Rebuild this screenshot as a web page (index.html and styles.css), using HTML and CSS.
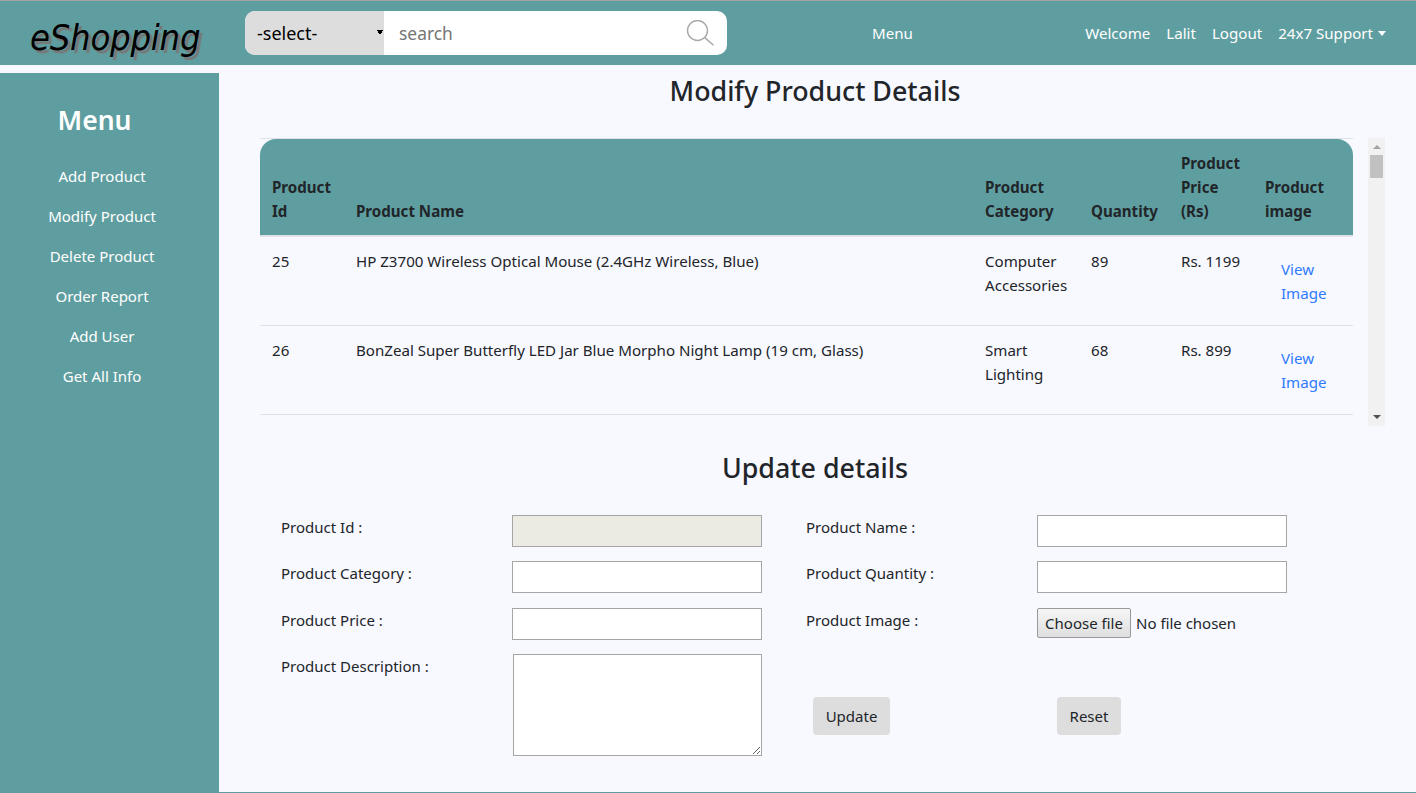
FILE: index.html
```html
<!DOCTYPE html>
<html lang="en">
<head>
    <meta charset="UTF-8">
    <meta name="viewport" content="width=device-width, initial-scale=1.0">
    <title>eShopping - Modify Product</title>
    <link rel="stylesheet" href="styles.css">
</head>
<body>
    <nav class="navbar">
        <a class="brand" href="#">eShopping</a>
        <form class="search-box">
            <select class="search-select">
                <option>-select-</option>
            </select>
            <input type="text" class="search-input" placeholder="search">
            <svg class="search-icon" viewBox="0 0 28 26">
                <circle cx="11.5" cy="10.5" r="10"/>
                <path d="M18.8 17.6 27.5 25.2"/>
            </svg>
        </form>
        <a class="nav-link nav-menu" href="#">Menu</a>
        <div class="nav-right">
            <a class="nav-link" href="#">Welcome</a>
            <a class="nav-link" href="#">Lalit</a>
            <a class="nav-link" href="#">Logout</a>
            <a class="nav-link support" href="#">24x7 Support</a>
        </div>
    </nav>

    <div class="page">
        <aside class="sidebar">
            <h3>Menu</h3>
            <ul>
                <li><a href="#">Add Product</a></li>
                <li><a href="#">Modify Product</a></li>
                <li><a href="#">Delete Product</a></li>
                <li><a href="#">Order Report</a></li>
                <li><a href="#">Add User</a></li>
                <li><a href="#">Get All Info</a></li>
            </ul>
        </aside>

        <main class="content">
            <h3 class="page-title">Modify Product Details</h3>

            <div class="table-area">
                <div class="table-scroll">
                    <table class="product-table">
                        <colgroup>
                            <col class="col-id">
                            <col class="col-name">
                            <col class="col-cat">
                            <col class="col-qty">
                            <col class="col-price">
                            <col class="col-img">
                        </colgroup>
                        <thead>
                            <tr>
                                <th>Product Id</th>
                                <th>Product Name</th>
                                <th>Product Category</th>
                                <th>Quantity</th>
                                <th>Product Price (Rs)</th>
                                <th>Product image</th>
                            </tr>
                        </thead>
                        <tbody>
                            <tr>
                                <td>25</td>
                                <td>HP Z3700 Wireless Optical Mouse (2.4GHz Wireless, Blue)</td>
                                <td>Computer Accessories</td>
                                <td>89</td>
                                <td>Rs. 1199</td>
                                <td><a class="view-link" href="#">View Image</a></td>
                            </tr>
                            <tr>
                                <td>26</td>
                                <td>BonZeal Super Butterfly LED Jar Blue Morpho Night Lamp (19 cm, Glass)</td>
                                <td>Smart Lighting</td>
                                <td>68</td>
                                <td>Rs. 899</td>
                                <td><a class="view-link" href="#">View Image</a></td>
                            </tr>
                        </tbody>
                    </table>
                </div>
                <div class="scrollbar">
                    <span class="arrow-up"></span>
                    <span class="thumb"></span>
                    <span class="arrow-down"></span>
                </div>
            </div>

            <h3 class="update-title">Update details</h3>

            <form class="update-form">
                <label>Product Id :</label>
                <input type="text" class="field field-disabled" disabled>
                <span></span>
                <label>Product Name :</label>
                <input type="text" class="field">

                <label>Product Category :</label>
                <input type="text" class="field">
                <span></span>
                <label>Product Quantity :</label>
                <input type="text" class="field">

                <label>Product Price :</label>
                <input type="text" class="field">
                <span></span>
                <label>Product Image :</label>
                <div class="file-field">
                    <button type="button" class="file-btn">Choose file</button>
                    <span>No file chosen</span>
                </div>

                <label>Product Description :</label>
                <textarea class="field-area"></textarea>
                <span></span>
                <div class="btn-cell"><button type="button" class="btn btn-update">Update</button></div>
                <div class="btn-cell"><button type="reset" class="btn btn-reset">Reset</button></div>
            </form>
        </main>
    </div>
</body>
</html>
```
FILE: styles.css
```css
* {
    margin: 0;
    padding: 0;
    box-sizing: border-box;
}

html, body {
    height: 793px;
    overflow: hidden;
}

body {
    font-family: "Noto Sans", "Open Sans", sans-serif;
    font-size: 15.1px;
    line-height: 24px;
    color: #212529;
    background: #f8f8ff;
    display: flex;
    flex-direction: column;
    border-top: 1px solid #a3a3a3;
    border-bottom: 1px solid #5f9ea0;
}

a {
    text-decoration: none;
}

/* top bar */
.navbar {
    height: 64px;
    flex-shrink: 0;
    background: #5f9ea0;
    display: flex;
    align-items: center;
    padding-right: 30px;
}

.brand {
    width: 245px;
    padding: 9px 0 0 30px;
    font-family: "DejaVu Sans Condensed", "DejaVu Sans", sans-serif;
    font-style: italic;
    font-size: 36px;
    line-height: 48px;
    letter-spacing: -0.2px;
    color: #000;
    text-shadow: 3px 3px 1px #777;
}

.search-box {
    width: 482px;
    height: 44px;
    border-radius: 10px;
    background: #fff;
    display: flex;
    align-items: center;
    overflow: hidden;
    position: relative;
}

.search-select {
    width: 139px;
    height: 44px;
    border: none;
    outline: none;
    padding-left: 12px;
    appearance: none;
    color: #000;
    font-family: inherit;
    font-size: 18px;
    background-color: #ddd;
    background-image:
        linear-gradient(to top right, transparent 50%, #000 50%),
        linear-gradient(to top left, transparent 50%, #000 50%);
    background-size: 3px 5px;
    background-repeat: no-repeat;
    background-position: 132px 19px, 135px 19px;
}

.search-input {
    flex: 1;
    height: 44px;
    border: none;
    outline: none;
    padding-left: 15px;
    background: transparent;
    font-family: inherit;
    font-size: 17.4px;
}

.search-input::placeholder {
    color: #757575;
}

.search-icon {
    position: absolute;
    right: 13px;
    top: 9px;
    width: 28px;
    height: 26px;
    fill: none;
    stroke: #a8a8a8;
    stroke-width: 1.4;
}

.nav-link {
    color: #fff;
}

.nav-menu {
    margin-left: 145px;
}

.nav-right {
    margin-left: auto;
    display: flex;
    gap: 16px;
}

.support::after {
    content: "";
    display: inline-block;
    margin-left: 5px;
    vertical-align: 3px;
    border-top: 5px solid #fff;
    border-left: 4.5px solid transparent;
    border-right: 4.5px solid transparent;
}

/* below the bar */
.page {
    flex: 1;
    display: flex;
    min-height: 0;
}

.sidebar {
    width: 219px;
    flex-shrink: 0;
    margin-top: 8px;
    background: #5f9ea0;
    color: #fff;
    font-size: 15px;
}

.sidebar h3 {
    width: 189px;
    margin-top: 29px;
    text-align: center;
    font-size: 26.5px;
    font-weight: 600;
    line-height: 36px;
}

.sidebar ul {
    list-style: none;
    width: 204px;
    margin-top: 18px;
    text-align: center;
}

.sidebar li {
    height: 40px;
    padding-top: 8px;
}

.sidebar a {
    color: #fff;
}

.content {
    flex: 1;
    min-width: 0;
    padding-right: 5px;
}

.page-title,
.update-title {
    text-align: center;
    font-size: 26.8px;
    font-weight: 500;
    line-height: 34px;
}

.page-title {
    margin-top: 9px;
}

/* table with the scrollbar beside it */
.table-area {
    width: 1125px;
    height: 288px;
    margin: 30px 0 0 41px;
    display: flex;
    justify-content: space-between;
}

.table-scroll {
    width: 1093px;
    overflow: hidden;
}

.scrollbar {
    width: 17px;
    background: #f1f1f1;
    display: flex;
    flex-direction: column;
    align-items: center;
    position: relative;
}

.arrow-up,
.arrow-down {
    position: absolute;
    left: 4.5px;
    border-left: 4px solid transparent;
    border-right: 4px solid transparent;
}

.arrow-up {
    top: 7px;
    border-bottom: 4px solid #a3a3a3;
}

.arrow-down {
    bottom: 7px;
    border-top: 4px solid #505050;
}

.thumb {
    width: 13px;
    height: 23px;
    margin-top: 17px;
    background: #c1c1c1;
}

.product-table {
    width: 100%;
    table-layout: fixed;
    border-collapse: separate;
    border-spacing: 0;
    border-top: 1px solid #dee2e6;
}

.col-id { width: 84px; }
.col-name { width: 629px; }
.col-cat { width: 106px; }
.col-qty { width: 90px; }
.col-price { width: 84px; }
.col-img { width: 100px; }

.product-table th {
    background: #5f9ea0;
    padding: 12px;
    text-align: left;
    vertical-align: bottom;
    font-weight: 700;
    border-bottom: 2px solid #dee2e6;
}

.product-table th:first-child {
    border-top-left-radius: 16px;
}

.product-table th:last-child {
    border-top-right-radius: 16px;
}

.product-table td {
    padding: 12px;
    vertical-align: top;
    border-bottom: 1px solid #dee2e6;
}

.view-link {
    display: block;
    padding: 8px 16px;
    color: #2f7bff;
}

/* update form */
.update-title {
    margin-top: 25px;
}

.update-form {
    display: grid;
    grid-template-columns: 231px 250px 44px 231px 250px;
    grid-template-rows: 32px 33px 32px 102px;
    row-gap: 14px;
    margin: 30px 0 0 62px;
    font-size: 15px;
}

.field {
    height: 32px;
    border: 1px solid #a6a6a6;
    background: #fff;
    outline: none;
}

.field-disabled {
    background: #ebebe4;
}

.file-field {
    display: flex;
    align-items: flex-start;
    gap: 5px;
    line-height: 30px;
}

.file-btn {
    width: 94px;
    height: 30px;
    font-family: inherit;
    font-size: 15px;
    color: #212529;
    border: 1px solid #9a9a9a;
    border-radius: 2px;
    background: linear-gradient(#f6f6f6, #dedede);
}

.field-area {
    width: 249px;
    height: 102px;
    justify-self: end;
    border: 1px solid #a6a6a6;
    background: #fff;
    outline: none;
}

.btn-cell {
    align-self: end;
    padding-bottom: 21px;
}

.btn {
    height: 38px;
    border: none;
    border-radius: 4px;
    background: #ddd;
    color: #212529;
    font-family: inherit;
    font-size: 15px;
}

.btn-update {
    width: 77px;
    margin-left: 7px;
}

.btn-reset {
    width: 64px;
    margin-left: 20px;
}
```
